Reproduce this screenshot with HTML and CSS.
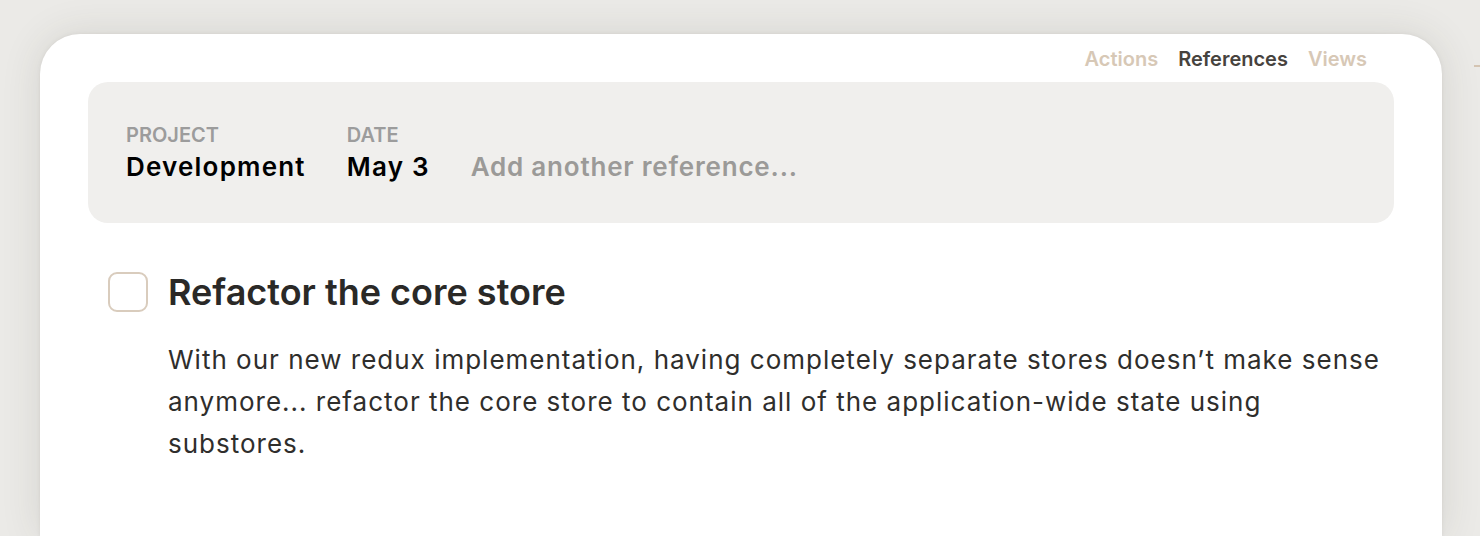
FILE: index.html
```html
<!DOCTYPE html>
<html lang="en">
<head>
    <meta charset="UTF-8">
    <meta name="viewport" content="width=device-width, initial-scale=1.0">
    <title>Refactor the core store</title>
    <link rel="stylesheet" href="styles.css">
</head>
<body>
    <div class="card">
        <nav class="tabs">
            <a class="tab">Actions</a>
            <a class="tab active">References</a>
            <a class="tab">Views</a>
        </nav>

        <div class="references">
            <div class="ref">
                <div class="ref-label">Project</div>
                <div class="ref-value">Development</div>
            </div>
            <div class="ref">
                <div class="ref-label">Date</div>
                <div class="ref-value">May 3</div>
            </div>
            <input class="ref-add" type="text" placeholder="Add another reference...">
        </div>

        <div class="task">
            <div class="task-head">
                <span class="checkbox"></span>
                <h1 class="task-title">Refactor the core store</h1>
            </div>
            <p class="task-body">With our new redux implementation, having completely separate stores doesn’t make sense anymore... refactor the core store to contain all of the application-wide state using substores.</p>
        </div>
    </div>

    <span class="edge-mark"></span>
</body>
</html>
```

FILE: styles.css
```css
body {
    margin: 0;
    padding: 34px 38px 0 40px;
    height: 536px;
    box-sizing: border-box;
    overflow: hidden;
    font-family: 'Inter', 'Noto Sans', sans-serif;
    background: #ebeae7;
    position: relative;
}
.card {
    background: #fff;
    border-radius: 40px 40px 0 0;
    padding: 0 48px;
    height: 502px;
    box-shadow: 0 0 40px rgba(60, 55, 45, 0.12), 0 0 4px rgba(60, 55, 45, 0.08);
}
.tabs {
    display: flex;
    justify-content: flex-end;
    align-items: center;
    gap: 20px;
    height: 48px;
    padding: 2px 27px 0 0;
    box-sizing: border-box;
}
.tab {
    font-size: 20px;
    line-height: 24px;
    font-weight: 600;
    color: #d7c8b6;
    cursor: pointer;
}
.tab.active {
    color: #47433e;
}
.references {
    display: flex;
    align-items: flex-end;
    gap: 41px;
    background: #f0efed;
    border-radius: 20px;
    padding: 41px 38px 40px;
}
.ref-label {
    font-size: 20px;
    line-height: 24px;
    font-weight: 600;
    text-transform: uppercase;
    color: #9c9c9c;
    margin-bottom: 4px;
}
.ref-value {
    font-size: 26px;
    line-height: 32px;
    font-weight: 600;
    letter-spacing: 1.2px;
    color: #000;
}
.ref-add {
    flex: 1;
    border: none;
    background: none;
    padding: 0;
    font-family: inherit;
    font-size: 26px;
    line-height: 32px;
    height: 32px;
    font-weight: 600;
    letter-spacing: 0.8px;
    outline: none;
}
.ref-add::placeholder {
    color: #9b9a98;
}
.task {
    padding: 47px 0 0 20px;
}
.task-head {
    display: flex;
    align-items: center;
    gap: 20px;
}
.checkbox {
    width: 40px;
    height: 40px;
    box-sizing: border-box;
    border: 2px solid #d9ccbd;
    border-radius: 9px;
}
.task-title {
    margin: 0;
    font-size: 36px;
    line-height: 44px;
    font-weight: 600;
    color: #2a2927;
}
.task-body {
    margin: 25px 0 0 60px;
    font-size: 26px;
    line-height: 42px;
    letter-spacing: 1px;
    color: #2f2e2c;
}
.edge-mark {
    position: absolute;
    top: 65px;
    left: 1474px;
    width: 8px;
    height: 2px;
    background: #d4c4b2;
}
```
